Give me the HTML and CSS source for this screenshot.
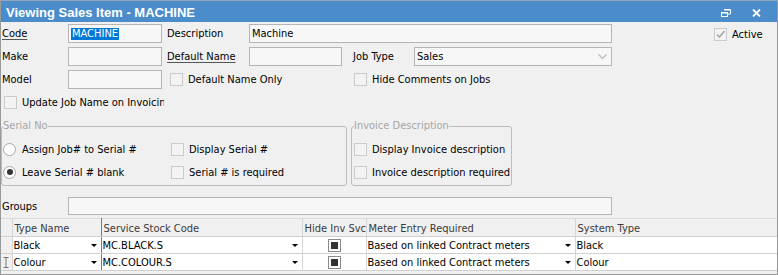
FILE: index.html
```html
<!DOCTYPE html>
<html lang="en">
<head>
    <meta charset="UTF-8">
    <title>Viewing Sales Item - MACHINE</title>
    <link rel="stylesheet" href="styles.css">
</head>
<body>
    <div class="window">
        <div class="titlebar">
            <span class="title">Viewing Sales Item - MACHINE</span>
            <div class="controls">
                <svg class="restore" width="10" height="8" viewBox="0 0 10 8">
                    <path d="M3 0.5h6.5v4.5h-2.5" fill="none" stroke="#fff"/>
                    <path d="M3 1h6" stroke="#fff" stroke-width="1"/>
                    <rect x="0.5" y="3.5" width="6" height="4" fill="none" stroke="#fff"/>
                    <path d="M0 4h7" stroke="#fff" stroke-width="1"/>
                </svg>
                <svg class="close" width="9" height="8" viewBox="0 0 9 8">
                    <path d="M1 0.5l7 7M8 0.5l-7 7" stroke="#fff" stroke-width="1.8"/>
                </svg>
            </div>
        </div>

        <div class="form">
            <div class="row row1">
                <span class="lbl"><u>Code</u></span>
                <div class="field w-short"><span class="selected">MACHINE</span></div>
                <span class="lbl lbl2">Description</span>
                <div class="field w-desc">Machine</div>
                <div class="check active-check">
                    <span class="box checked">
                        <svg width="11" height="11" viewBox="0 0 11 11"><path d="M2 5.5l2.5 2.5 5-6" fill="none" stroke="#a8a8a8" stroke-width="1.6"/></svg>
                    </span>
                    <span>Active</span>
                </div>
            </div>

            <div class="row">
                <span class="lbl">Make</span>
                <div class="field w-short"></div>
                <span class="lbl lbl2"><u>Default Name</u></span>
                <div class="field w-mid"></div>
                <span class="lbl lbl3">Job Type</span>
                <div class="field w-combo">
                    <span>Sales</span>
                    <svg class="chevron" width="9" height="6" viewBox="0 0 9 6"><path d="M0.5 0.5l4 4 4-4" fill="none" stroke="#b8b8b8" stroke-width="1.2"/></svg>
                </div>
            </div>

            <div class="row">
                <span class="lbl">Model</span>
                <div class="field w-short"></div>
                <div class="check cell-default"><span class="box"></span><span>Default Name Only</span></div>
                <div class="check"><span class="box"></span><span>Hide Comments on Jobs</span></div>
            </div>

            <div class="row row4">
                <div class="check clip"><span class="box"></span><span>Update Job Name on Invoicing</span></div>
            </div>

            <div class="groups">
                <fieldset class="group serial">
                    <legend>Serial No</legend>
                    <div class="group-grid">
                        <div class="check"><span class="radio"></span><span>Assign Job# to Serial #</span></div>
                        <div class="check"><span class="box"></span><span>Display Serial #</span></div>
                        <div class="check"><span class="radio on"></span><span>Leave Serial # blank</span></div>
                        <div class="check"><span class="box"></span><span>Serial # is required</span></div>
                    </div>
                </fieldset>
                <fieldset class="group invoice">
                    <legend>Invoice Description</legend>
                    <div class="check"><span class="box"></span><span>Display Invoice description</span></div>
                    <div class="check"><span class="box"></span><span>Invoice description required</span></div>
                </fieldset>
            </div>

            <div class="row row-groups">
                <span class="lbl">Groups</span>
                <div class="field w-groups"></div>
            </div>
        </div>

        <table class="grid">
            <colgroup>
                <col class="c-ind">
                <col class="c-type">
                <col class="c-code">
                <col class="c-hide">
                <col class="c-meter">
                <col class="c-sys">
            </colgroup>
            <thead>
                <tr>
                    <th></th>
                    <th class="dark-right">Type Name</th>
                    <th>Service Stock Code</th>
                    <th>Hide Inv Svc</th>
                    <th>Meter Entry Required</th>
                    <th>System Type</th>
                </tr>
            </thead>
            <tbody>
                <tr>
                    <td class="ind"></td>
                    <td class="dark-right"><div class="drop">Black<i class="arrow"></i></div></td>
                    <td><div class="drop">MC.BLACK.S<i class="arrow"></i></div></td>
                    <td class="center"><span class="gbox"><span></span></span></td>
                    <td><div class="drop">Based on linked Contract meters<i class="arrow"></i></div></td>
                    <td>Black</td>
                </tr>
                <tr>
                    <td class="ind">
                        <svg width="6" height="11" viewBox="0 0 6 11"><path d="M0.5 0.5h5M0.5 10.5h5M3 0.5v10" fill="none" stroke="#777" stroke-width="1"/></svg>
                    </td>
                    <td class="dark-right"><div class="drop">Colour<i class="arrow"></i></div></td>
                    <td><div class="drop">MC.COLOUR.S<i class="arrow"></i></div></td>
                    <td class="center"><span class="gbox"><span></span></span></td>
                    <td><div class="drop">Based on linked Contract meters<i class="arrow"></i></div></td>
                    <td>Colour</td>
                </tr>
            </tbody>
        </table>
    </div>
</body>
</html>
```

FILE: styles.css
```css
* {
    box-sizing: border-box;
}
body {
    margin: 0;
    background-color: #f0f0f0;
    font-family: "DejaVu Sans Condensed", "DejaVu Sans", sans-serif;
    font-stretch: condensed;
    font-size: 11px;
    color: #000;
}
.window {
    width: 778px;
    height: 275px;
    overflow: hidden;
    border-left: 1px solid #9a9a9a;
    border-right: 1px solid #9a9a9a;
    border-bottom: 1px solid #9a9a9a;
    background-color: #f0f0f0;
}
.titlebar {
    height: 22px;
    background-color: #4a8dca;
    border-top: 1px solid #8fa6bb;
    display: flex;
    align-items: center;
    justify-content: space-between;
    margin: 0 -1px;
}
.title {
    color: #fff;
    font-family: "Liberation Sans", Arial, sans-serif;
    font-stretch: normal;
    font-weight: bold;
    font-size: 13px;
    padding-left: 6px;
    padding-top: 1px;
}
.controls {
    display: flex;
    align-items: center;
    padding-right: 17px;
    padding-top: 3px;
}
.controls .restore {
    margin-right: 21px;
}

/* form rows */
.form {
    padding-top: 2px;
}
.row {
    display: flex;
    align-items: center;
    height: 19px;
    margin-bottom: 4px;
}
.lbl {
    width: 67px;
    padding-left: 1px;
    flex: none;
}
.lbl2 {
    width: 82px;
    margin-left: 5px;
    padding-left: 0;
}
.lbl3 {
    width: 61px;
    margin-left: 11px;
    padding-left: 0;
}
.lbl u {
    text-decoration-color: #555;
    text-underline-offset: 2px;
}
.field {
    height: 19px;
    border: 1px solid #b5b5b5;
    background-color: #f7f7f7;
    padding-left: 2px;
    display: flex;
    align-items: center;
    flex: none;
}
.w-short {
    width: 94px;
}
.w-desc {
    width: 363px;
}
.w-mid {
    width: 93px;
}
.w-combo {
    width: 198px;
    justify-content: space-between;
    padding-right: 4px;
}
.w-groups {
    width: 544px;
    height: 18px;
}
.selected {
    background-color: #0078d7;
    color: #fff;
    padding: 0 1px;
    line-height: 12px;
}

.check {
    display: flex;
    align-items: center;
    height: 18px;
    white-space: nowrap;
}
.box {
    width: 13px;
    height: 13px;
    border: 1px solid #cbcbcb;
    background-color: #f3f3f3;
    margin-right: 5px;
    flex: none;
    display: flex;
    align-items: center;
    justify-content: center;
}
.radio {
    width: 13px;
    height: 13px;
    border: 1px solid #a8a8a8;
    border-radius: 50%;
    background-color: #fdfdfd;
    margin-right: 6px;
    flex: none;
    display: flex;
    align-items: center;
    justify-content: center;
}
.radio.on::after {
    content: "";
    width: 6px;
    height: 6px;
    border-radius: 50%;
    background-color: #333;
}
.active-check {
    margin-left: 102px;
    margin-top: 2px;
}
.cell-default {
    margin-left: 8px;
    width: 184px;
}
.row4 {
    height: 16px;
    margin-top: 5px;
    margin-bottom: 0;
}
.row4 .check {
    margin-left: 3px;
}
.clip {
    width: 160px;
    overflow: hidden;
}

/* group boxes */
.groups {
    display: flex;
    margin-top: 9px;
}
.group {
    margin: 0;
    border: 1px solid #bcbcbc;
    border-radius: 3px;
    padding: 0 0 3px 1px;
    height: 67px;
}
.group legend {
    padding: 0;
    color: #a6a6a6;
    line-height: 14px;
}
.serial {
    width: 346px;
}
.invoice {
    width: 161px;
    margin-left: 4px;
    padding-left: 2px;
}
.group .check {
    height: 18px;
    margin-top: 5px;
}
.group-grid {
    display: grid;
    grid-template-columns: 168px 1fr;
    padding-top: 2px;
}
.group-grid .check {
    margin-top: 5px;
}
.invoice .check:first-of-type {
    margin-top: 7px;
}
.row-groups {
    margin-top: 11px;
    height: 18px;
}

/* grid */
.grid {
    width: 776px;
    table-layout: fixed;
    border-collapse: collapse;
    margin-top: -1px;
    border-right: 1px solid #c8c8c8;
    border-bottom: 1px solid #c0c0c0;
}
.c-ind { width: 11px; }
.c-type { width: 89px; }
.c-code { width: 201px; }
.c-hide { width: 64px; }
.c-meter { width: 209px; }
.c-sys { width: 202px; }
.grid th {
    height: 18px;
    font-weight: normal;
    text-align: left;
    color: #3a3a3a;
    background-color: #f0f0f0;
    border-top: 1px solid #dcdcdc;
    border-right: 1px solid #d6d6d6;
    border-bottom: 1px solid #d0d0d0;
    padding: 2px 0 0 2px;
    white-space: nowrap;
    overflow: hidden;
}
.grid td {
    height: 17px;
    background-color: #fff;
    border-right: 1px solid #d6d6d6;
    border-bottom: 1px solid #d0d0d0;
    padding: 0 0 0 1px;
    white-space: nowrap;
    overflow: hidden;
}
.grid td.ind {
    background-color: #f0f0f0;
    padding: 0 0 0 2px;
    vertical-align: middle;
}
.grid td.ind svg {
    display: block;
}
.grid .dark-right {
    border-right: 1px solid #7c7c7c;
}
.drop {
    display: flex;
    align-items: center;
    justify-content: space-between;
    padding-right: 4px;
}
.arrow {
    width: 0;
    height: 0;
    border-left: 3px solid transparent;
    border-right: 3px solid transparent;
    border-top: 3px solid #000;
}
.center {
    text-align: center;
}
.gbox {
    display: inline-block;
    width: 13px;
    height: 13px;
    border: 1px solid #8a8a8a;
    background-color: #fff;
    padding: 2px;
    vertical-align: middle;
}
.gbox span {
    display: block;
    width: 7px;
    height: 7px;
    background-color: #333;
}
```
